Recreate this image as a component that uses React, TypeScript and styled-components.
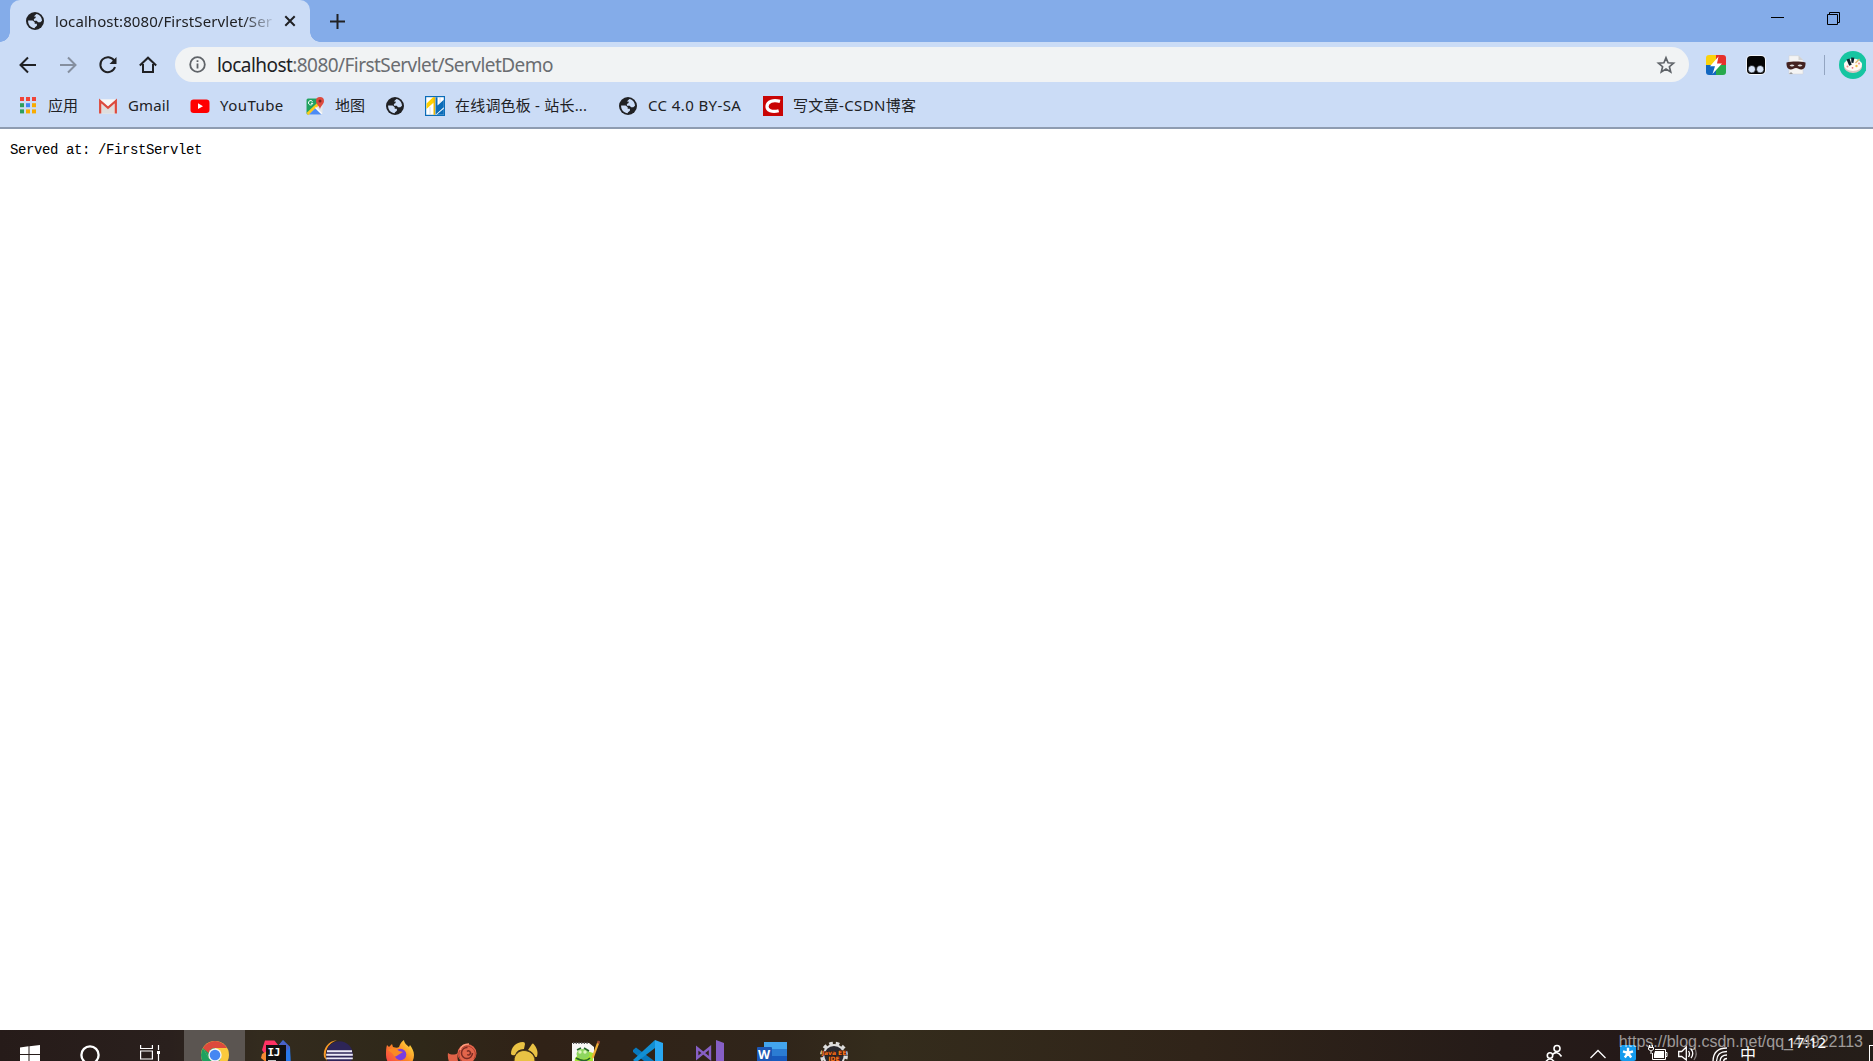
import React from "react";
import styled, { createGlobalStyle } from "styled-components";

const Global = createGlobalStyle`
  html, body { margin: 0; padding: 0; background: #fff; overflow: hidden; }
  * { box-sizing: border-box; }
  svg { display: block; flex: none; overflow: visible; }
`;

const uiFont = `"Noto Sans", "Noto Sans CJK SC", sans-serif`;

const Screen = styled.div`
  width: 1873px;
  height: 1061px;
  display: flex;
  flex-direction: column;
  overflow: hidden;
  font-family: ${uiFont};
  color: #202124;
`;

const TitleBar = styled.div`
  height: 42px;
  flex: none;
  display: flex;
  background: #84ace9;
  padding-left: 10px;
`;

const Tab = styled.div`
  position: relative;
  width: 300px;
  height: 42px;
  display: flex;
  align-items: center;
  padding-left: 15px;
  background: #cbdcf6;
  border-radius: 10px 10px 0 0;
  &::before, &::after {
    content: "";
    position: absolute;
    bottom: 0;
    width: 10px;
    height: 10px;
  }
  &::before {
    left: -10px;
    background: radial-gradient(circle at 0 0, transparent 9.5px, #cbdcf6 10px);
  }
  &::after {
    right: -10px;
    background: radial-gradient(circle at 100% 0, transparent 9.5px, #cbdcf6 10px);
  }
`;

const TabTitle = styled.div`
  width: 219px;
  margin-left: 10px;
  overflow: hidden;
  white-space: nowrap;
  font-size: 15px;
  line-height: 24px;
  letter-spacing: 0.08px;
  mask-image: linear-gradient(to right, #000 188px, transparent 222px);
`;

const CloseSlot = styled.div`
  margin-left: 11px;
`;

const NewTab = styled.div`
  display: flex;
  align-items: center;
  margin-left: 20px;
`;

const WindowControls = styled.div`
  display: flex;
  gap: 43px;
  margin-left: auto;
  padding: 12px 33px 0 0;
`;

const Toolbar = styled.div`
  height: 45px;
  flex: none;
  display: flex;
  align-items: center;
  background: #cbdcf6;
  padding-left: 8px;
`;

const ToolButton = styled.div`
  width: 40px;
  height: 40px;
  display: flex;
  align-items: center;
  justify-content: center;
`;

const Omnibox = styled.div`
  width: 1514px;
  height: 35px;
  margin-left: 7px;
  padding: 0 13px 0 14px;
  display: flex;
  align-items: center;
  border-radius: 18px;
  background: #f1f3f4;
`;

const Url = styled.div`
  margin-left: 11px;
  flex: 1;
  font-size: 19px;
  line-height: 30px;
  letter-spacing: -0.56px;
  white-space: nowrap;
  color: #6a6d71;
  b { font-weight: 400; color: #202124; }
`;

const Extensions = styled.div`
  display: flex;
  align-items: center;
  margin-left: 7px;
`;

const Divider = styled.div`
  width: 1px;
  height: 20px;
  margin: 0 14px 0 8px;
  background: #93a5c1;
`;

const Avatar = styled.div`
  width: 27px;
  height: 28px;
  overflow: hidden;
`;

const BookmarkBar = styled.div`
  height: 42px;
  flex: none;
  display: flex;
  background: #cbdcf6;
  border-bottom: 2px solid #8e9cb1;
  padding: 5px 0 0 18px;
`;

const Bookmark = styled.div<{ $w: number; $ls?: number }>`
  width: ${(p) => p.$w}px;
  height: 27px;
  display: flex;
  align-items: center;
  gap: 10px;
  white-space: nowrap;
  font-size: 15px;
  line-height: 25px;
  letter-spacing: ${(p) => p.$ls ?? 0}px;
  span { padding-bottom: 1px; }
`;

const Page = styled.main`
  flex: 1;
  background: #fff;
  padding: 12px 10px;
  color: #000;
  font: 14px/18px "Liberation Mono", monospace;
  letter-spacing: -0.4px;
`;

const Taskbar = styled.div`
  position: relative;
  height: 31px;
  flex: none;
  display: flex;
  overflow: hidden;
  background: linear-gradient(to right, #261b19 0, #2a201d 170px, #332b1e 260px, #2f2819 420px, #302217 540px, #30251a 780px, #342c1c 880px, #302419 1200px, #251b18 1500px, #241918 1640px, #251e19 1873px);
`;

const TaskSlot = styled.div<{ $w: number; $active?: boolean; $top: number }>`
  width: ${(p) => p.$w}px;
  height: 31px;
  flex: none;
  display: flex;
  justify-content: center;
  padding-top: ${(p) => p.$top}px;
  background: ${(p) => (p.$active ? "#5b5551" : "transparent")};
`;

const TaskGap = styled.div`
  width: 4px;
  flex: none;
`;

const Tray = styled.div`
  display: flex;
  margin-left: auto;
  padding-top: 15px;
  color: #fff;
`;

const TrayItem = styled.div<{ $w: number }>`
  width: ${(p) => p.$w}px;
  flex: none;
`;

const Ime = styled.span`
  display: block;
  font: 400 16px/16px "Noto Sans CJK SC", sans-serif;
`;

const Clock = styled.span`
  display: block;
  margin: -13px 0 0 -1px;
  font: 15px/20px ${uiFont};
  letter-spacing: 0.2px;
`;

const ShowDesktop = styled.div`
  width: 4px;
  height: 20px;
  border-left: 1px solid #fff;
  border-top: 1px solid #fff;
`;

const Watermark = styled.div`
  position: absolute;
  right: 10px;
  top: 3px;
  font: 16px/18px "Liberation Sans", sans-serif;
  white-space: nowrap;
  color: rgba(255, 255, 255, 0.56);
`;

const Globe = ({ size = 20 }: { size?: number }) => (
  <svg width={size} height={size} viewBox="0 0 20 20">
    <circle cx="10" cy="10" r="9" fill="#202124" />
    <path d="M3.1 9.6h4.5l2.1 1.6v1.5h2.2v2.1l-2.1 1.6v.9C5.900 17.300 2.900 13.800 3.100 9.600zM11.400 3.100c3.200.6 5.500 3.500 5.600 6.600l-1.700 1.500h-2.200l-1.400-1.500H8.900V8l1.700-.9V5.600H8.800z" fill="#cbdcf6" />
  </svg>
);

const Line = ({ d, color = "#202124", w = 2 }: { d: string; color?: string; w?: number }) => (
  <svg width="18" height="18" viewBox="0 0 18 18" fill="none" stroke={color} strokeWidth={w}>
    <path d={d} />
  </svg>
);

const Reload = () => (
  <svg width="18" height="18" viewBox="0 0 18 18">
    <path d="M15.2 4.600A7.500 7.500 0 1 0 16 11" fill="none" stroke="#202124" strokeWidth="2" />
    <path d="M17.500 1v7h-7z" fill="#202124" />
  </svg>
);

const appColors = ["#f04438", "#f04438", "#f04438", "#2e9e5b", "#4285f4", "#f9ab00", "#2e9e5b", "#f9ab00", "#f9ab00"];
const Apps = () => (
  <svg width="20" height="20" viewBox="0 0 20 20">
    {appColors.map((c, i) => (
      <rect key={i} x={2 + (i % 3) * 6} y={1 + Math.floor(i / 3) * 6.2} width="4" height="4" fill={c} />
    ))}
  </svg>
);

const Gmail = () => (
  <svg width="20" height="20" viewBox="0 0 20 20">
    <rect x="1" y="3.500" width="18" height="14" rx="1.200" fill="#f2f2f2" />
    <path d="M4 17.500V8l6 5 6-5v9.500" fill="#dedede" />
    <path d="M2.200 17.500V5l7.800 6.800L17.800 5v12.500" fill="none" stroke="#dc4b3e" strokeWidth="2.300" />
    <path d="M2.500 3.500h15L10 9.800z" fill="#f7f7f7" />
  </svg>
);

const YouTube = () => (
  <svg width="20" height="20" viewBox="0 0 20 20">
    <rect x=".5" y="3.500" width="19" height="13.500" rx="3.200" fill="#f00" />
    <path d="M8 7.300l5 2.900-5 2.900z" fill="#fff" />
  </svg>
);

const Maps = () => (
  <svg width="20" height="20" viewBox="0 0 20 20">
    <rect x="1.500" y="2.500" width="16" height="16" rx="1.500" fill="#e4e7ea" />
    <path d="M1.500 4A1.500 1.500 0 0 1 3 2.500h9.500L14 7 3 18.500A1.500 1.500 0 0 1 1.500 17z" fill="#1fa262" />
    <path d="M2.500 18.200L14.200 7" stroke="#fbcb1b" strokeWidth="3" />
    <path d="M4 18.500l6.300-6.200 6.200 6.200z" fill="#4c8bf5" />
    <path d="M10.500 11.500l6.200 6.200" stroke="#fff" strokeWidth="1.200" />
    <path d="M15 13.500c-.3-3.500-4-5-4-8.500a4 4 0 0 1 8 0c0 3.500-3.700 5-4 8.500z" fill="#de4b3f" />
    <circle cx="15" cy="4.900" r="1.500" fill="#7b2720" />
    <path d="M7.600 5.700a2.200 2.200 0 1 0 .2 1.600H6" fill="none" stroke="#fff" strokeWidth="1" />
  </svg>
);

const Palette = () => (
  <svg width="20" height="20" viewBox="0 0 20 20">
    <rect x=".6" y=".6" width="18.800" height="18.800" fill="#fff" stroke="#0a6cb8" strokeWidth="1.200" />
    <path d="M1.500 7.500L8 1.200h1.500V12L8.700 6.500 1.500 13z" fill="#ffd000" />
    <path d="M8.500 1.200h1.700v17.600H8.500z" fill="#e8b80a" />
    <path d="M10.500 1.200h2v8.200l6.300-5.600v7.500l-8.300 7.500z" fill="#0a6cb8" />
    <path d="M11.500 18.800l7.300-6v6z" fill="#0a6cb8" />
    <path d="M5 11v8M15 1v6" stroke="#cfd6dc" strokeWidth=".8" />
  </svg>
);

const Csdn = () => (
  <svg width="20" height="20" viewBox="0 0 20 20">
    <rect width="20" height="20" fill="#c90505" />
    <path d="M17 5.400C10.500 3.500 4.400 5.200 4 10.200c-.3 4.400 5 6.300 11.700 4.600" fill="none" stroke="#fff" strokeWidth="3.200" />
  </svg>
);

const Bolt = () => (
  <svg width="22" height="22" viewBox="0 0 22 22">
    <path d="M11 1H4a3 3 0 0 0-3 3v7h10z" fill="#fbd20b" />
    <path d="M11 1h7a3 3 0 0 1 3 3v7H11z" fill="#e6302b" />
    <path d="M1 11v7a3 3 0 0 0 3 3h7V11z" fill="#1267c0" />
    <path d="M21 11v7a3 3 0 0 1-3 3h-7V11z" fill="#27a94c" />
    <path d="M13.500 2.500L5 12.200h5L7.500 20 17 9.500h-5z" fill="#fff" />
  </svg>
);

const Tamper = () => (
  <svg width="22" height="22" viewBox="0 0 22 22">
    <rect x="1" y="1" width="20" height="20" rx="5" fill="#f3f6fb" />
    <rect x="2" y="2" width="18" height="18" rx="4" fill="#050505" />
    <circle cx="6.800" cy="15.200" r="3.700" fill="#d7e4f7" stroke="#000" strokeWidth=".6" />
    <circle cx="15.200" cy="15.200" r="3.700" fill="#d7e4f7" stroke="#000" strokeWidth=".6" />
  </svg>
);

const Masked = () => (
  <svg width="22" height="22" viewBox="0 0 22 22">
    <path d="M4 1.700h9.500L18 6v14H4z" fill="#f4f4f4" stroke="#d0d0d0" strokeWidth=".5" />
    <path d="M13.500 1.700V6H18z" fill="#d2d2d2" />
    <path d="M1.500 8.500C7 7.300 15 7.300 20.500 8.500c.2 4-1 6.700-4 7-2.300.2-3.400-1.500-5.500-1.500s-3.200 1.700-5.500 1.500c-3-.3-4.200-3-4-7z" fill="#432220" />
    <path d="M4.500 11.500q2.500-2 5 0-2.500 1.800-5 0zM12.500 11.500q2.500-2 5 0-2.500 1.800-5 0z" fill="#ddd" />
    <path d="M4 20l2-2 2 2z" fill="#999" />
  </svg>
);

const AvatarArt = () => (
  <svg width="28" height="28" viewBox="0 0 28 28">
    <circle cx="14" cy="14" r="14" fill="#16c5a1" />
    <ellipse cx="14" cy="15.500" rx="9" ry="6.500" fill="#d9c8c3" />
    <ellipse cx="14" cy="13.800" rx="9" ry="6.200" fill="#fffaf4" />
    <path d="M7.500 8.500l3-.9 2.200 6.200-2.500.9zM12.100 6.500l3.300.2-1 5.300-2-.3z" fill="#10222c" />
    <path d="M16.500 12l4-4" stroke="#d8b56d" strokeWidth="1.300" />
    <circle cx="8.500" cy="15.500" r="1" fill="#f18989" />
    <circle cx="17.500" cy="15" r="1.200" fill="#f0bd44" />
    <circle cx="13.500" cy="16.800" r=".9" fill="#e46e7f" />
    <circle cx="20" cy="12.500" r=".9" fill="#f18989" />
  </svg>
);

const WindowsLogo = () => (
  <svg width="20" height="20" viewBox="0 0 20 20">
    <path d="M0 2.500L8.500 1.300V9H0zM9.500 1.200L20 0v9H9.500zM0 10h8.500v8.700L0 17.500zM9.500 10H20v10L9.500 18.800z" fill="#fff" />
  </svg>
);

const Cortana = () => (
  <svg width="20" height="20" viewBox="0 0 20 20">
    <circle cx="10" cy="10" r="8.600" fill="none" stroke="#fff" strokeWidth="2.300" />
  </svg>
);

const TaskView = () => (
  <svg width="20" height="20" viewBox="0 0 20 20" fill="none" stroke="#fff" strokeWidth="1.200">
    <path d="M.6 0v3.500h11.800V0M.6 20v-3.500h11.800V20M.6 6h11.800v8H.6zM18.500 0v5M18.500 9v8" />
    <path d="M17 6h3v3h-3z" fill="#fff" stroke="none" />
  </svg>
);

const Chrome = () => (
  <svg width="28" height="28" viewBox="0 0 28 28">
    <circle cx="14" cy="14" r="14" fill="#fbc93d" />
    <path d="M14 14l-6 3.500L1.900 7a14 14 0 0 0 11.500 21L20 17z" fill="#1da160" />
    <path d="M1.900 7l6 10.500L14 14V7z" fill="#1da160" />
    <path d="M1.900 7A14 14 0 0 1 26.100 7H14a7 7 0 0 0-6.500 5z" fill="#dc4a3d" />
    <circle cx="14" cy="14" r="6.700" fill="#f4f4f4" />
    <circle cx="14" cy="14" r="5.300" fill="#4687f2" />
  </svg>
);

const IntelliJ = () => (
  <svg width="30" height="30" viewBox="0 0 30 30">
    <path d="M17 6l5-6 7 7 1 18-9 5z" fill="#2878e8" />
    <path d="M17 6l5-5.500L29 7l-6 7z" fill="#4b62c8" />
    <path d="M4 .5h9.500L17 5l-3 8-9 3-4-6z" fill="#fe3264" />
    <path d="M1 14l5-3v12l-6-5z" fill="#f58a32" />
    <rect x="5" y="5" width="20" height="20" fill="#101010" />
    <text x="6.500" y="15.500" fill="#fff" fontFamily="DejaVu Sans Mono" fontWeight="700" fontSize="11" letterSpacing="-.4">IJ</text>
    <path d="M7 21h8" stroke="#fff" strokeWidth="1.500" />
  </svg>
);

const Eclipse = () => (
  <svg width="30" height="30" viewBox="0 0 30 30">
    <path d="M14 .3A14 14 0 0 0 1 17l3 4A15 15 0 0 1 14 .3z" fill="#f79a28" />
    <circle cx="16.500" cy="14.500" r="13.300" fill="#2d2557" />
    <path d="M4 11.200h25M3.200 14.800h26.600M3.200 18.400h26.600M4 22h25" stroke="#eceaf7" strokeWidth="1.900" />
  </svg>
);

const Firefox = () => (
  <svg width="30" height="30" viewBox="0 0 30 30">
    <defs>
      <linearGradient id="ff" x1="0" y1="1" x2="1" y2="0">
        <stop offset="0" stopColor="#f92e53" /><stop offset=".55" stopColor="#fb8a23" /><stop offset="1" stopColor="#fff047" />
      </linearGradient>
    </defs>
    <path d="M2 5l2 2 3-3 1 3c3 1 5 1 6 0 1-3 2-5 5-7 0 3 3 5 5 7l1-2c2 3 4 6 4 10a14 14 0 0 1-28 0c0-4 0-7 1-10z" fill="url(#ff)" />
    <circle cx="15.500" cy="14.500" r="5.800" fill="#7a3de0" />
    <path d="M3 10c5-3 8-2 11 1l4 1-5 3c-2 2-4 2-5-1z" fill="#fa8a25" />
  </svg>
);

const Snail = () => (
  <svg width="30" height="28" viewBox="0 0 30 28">
    <path d="M1 10c3 2 7 2 10 0-2 9 2 13 8 14L9 25C3 23 0 17 1 10z" fill="#e06247" />
    <circle cx="20" cy="10.500" r="9.500" fill="#e2654b" />
    <path d="M15 18a8.300 8.300 0 1 1 12-2" fill="none" stroke="#b0402f" strokeWidth="1" />
    <path d="M20.500 4.500a5.500 5.500 0 1 0 5 5.500M20 8.500a2 2 0 1 1 .2 3" fill="none" stroke="#7b2c23" strokeWidth="1.500" />
    <path d="M13 7q2-6 9-6" fill="none" stroke="#ff9b7d" strokeWidth="1.400" />
  </svg>
);

const Paw = () => (
  <svg width="28" height="30" viewBox="0 0 28 30" fill="#e9c244">
    <path d="M1 13C1 6 6 1 13 1q2 0 2 2l-1 5q-7 0-9 6-3 1-4-1z" />
    <path d="M18 9l4-6q1-1 2 .5c4 5 4 9 3 12q-1 1-2 0-2-5-7-6.500z" />
    <path d="M4 20c0-7 5-10.500 10-10.500S25 13 25 20s-4 9-11 9-10-3-10-9z" stroke="#4a3818" strokeWidth="1" />
  </svg>
);

const Notepad = () => (
  <svg width="30" height="30" viewBox="0 0 30 30">
    <path d="M2 2h17l5 4v22H2z" fill="#f7f7f5" />
    <path d="M3 2h16" stroke="#555" strokeWidth="2" strokeDasharray="1.200 1.500" />
    <path d="M14 9l9 3v16H4l1-11z" fill="#a6e434" />
    <ellipse cx="13" cy="13" rx="6.500" ry="5" fill="#8ed65f" />
    <path d="M6 17q9 5 14 0M7 9l4-2M14 7l5 3" fill="none" stroke="#26662a" strokeWidth="1.600" />
    <circle cx="10" cy="11" r="1.700" fill="#dff6c0" /><circle cx="15" cy="11" r="1.700" fill="#dff6c0" />
    <path d="M28.500 1l-6 16" stroke="#efae35" strokeWidth="2.200" />
    <path d="M29 0l-1 2.500" stroke="#9d4930" strokeWidth="2.400" />
  </svg>
);

const VSCode = () => (
  <svg width="30" height="30" viewBox="0 0 30 30">
    <path d="M22 0l8 3v24l-8 3z" fill="#29a8f2" />
    <path d="M0 10l3-2.500L24 23l-2 7L0 12z" fill="#0878bd" />
    <path d="M0 20L22 0v8L3 22.500z" fill="#118fd4" />
  </svg>
);

const VisualStudio = () => (
  <svg width="28" height="28" viewBox="0 0 28 28">
    <path d="M20 0l8 3v22l-8 3z" fill="#865fc5" />
    <path d="M1.200 8v10L14 7.500v11z" fill="none" stroke="#865fc5" strokeWidth="2.400" />
  </svg>
);

const Word = () => (
  <svg width="30" height="28" viewBox="0 0 30 28">
    <path d="M7 0h23v7H7z" fill="#43a5ee" />
    <path d="M7 7h23v7H7z" fill="#2b7cd3" />
    <path d="M7 14h23v14H7z" fill="#185abd" />
    <rect x="0" y="5" width="15" height="17" rx="1" fill="#1c57b5" />
    <text x="1" y="16.500" fill="#fff" fontFamily="Open Sans" fontWeight="700" fontSize="12.500">W</text>
  </svg>
);

const JavaEE = () => (
  <svg width="30" height="30" viewBox="0 0 30 30">
    <circle cx="15" cy="14.500" r="12.300" fill="none" stroke="#dcdcdc" strokeWidth="3.200" strokeDasharray="3.600 3" />
    <circle cx="15" cy="14.500" r="10.500" fill="#2a2a30" stroke="#dedede" strokeWidth="1.800" />
    <g fill="#ff761b" stroke="#2b1710" strokeWidth="1" paintOrder="stroke" fontFamily="DejaVu Sans" fontWeight="700" fontSize="6" textAnchor="middle">
      <text x="15" y="13.500">Java EE</text>
      <text x="15" y="19.500">IDE</text>
    </g>
  </svg>
);

const bookmarks = [
  { icon: <Apps />, label: "应用", w: 80, ls: -0.1 },
  { icon: <Gmail />, label: "Gmail", w: 92, ls: 0.1 },
  { icon: <YouTube />, label: "YouTube", w: 115, ls: 0.45 },
  { icon: <Maps />, label: "地图", w: 80, ls: 0 },
  { icon: <Globe />, label: "", w: 40, ls: 0 },
  { icon: <Palette />, label: "在线调色板 - 站长...", w: 193, ls: 0.2 },
  { icon: <Globe />, label: "CC 4.0 BY-SA", w: 145, ls: 0.4 },
  { icon: <Csdn />, label: "写文章-CSDN博客", w: 160, ls: 0.35 },
];

const tasks = [
  { icon: <WindowsLogo />, w: 60, top: 15 },
  { icon: <Cortana />, w: 60, top: 15 },
  { icon: <TaskView />, w: 60, top: 15 },
  { icon: <Chrome />, w: 61, top: 11, active: true, gap: true },
  { icon: <IntelliJ />, w: 62, top: 10 },
  { icon: <Eclipse />, w: 61, top: 10 },
  { icon: <Firefox />, w: 63, top: 10 },
  { icon: <Snail />, w: 62, top: 13 },
  { icon: <Paw />, w: 61, top: 11 },
  { icon: <Notepad />, w: 62, top: 11 },
  { icon: <VSCode />, w: 63, top: 10 },
  { icon: <VisualStudio />, w: 62, top: 10 },
  { icon: <Word />, w: 61, top: 12 },
  { icon: <JavaEE />, w: 63, top: 11 },
];

const white = { fill: "none", stroke: "#fff", strokeWidth: 1.3 };

export default function App() {
  return (
    <Screen>
      <Global />
      <TitleBar>
        <Tab>
          <Globe />
          <TabTitle>localhost:8080/FirstServlet/Ser</TabTitle>
          <CloseSlot>
            <svg width="10" height="10" viewBox="0 0 10 10" stroke="#202124" strokeWidth="2"><path d="M.3.300l9.400 9.400M9.700.3L.3 9.700" /></svg>
          </CloseSlot>
        </Tab>
        <NewTab>
          <svg width="15" height="15" viewBox="0 0 15 15" stroke="#202124" strokeWidth="2"><path d="M7.500 0v15M0 7.500h15" /></svg>
        </NewTab>
        <WindowControls>
          <svg width="13" height="13" viewBox="0 0 13 13" stroke="#000"><path d="M0 5.500h13" /></svg>
          <svg width="13" height="13" viewBox="0 0 13 13" stroke="#000" fill="none"><path d="M.5 2.500h10v10H.5zM2.500 2.500v-2h10v10h-2" /></svg>
        </WindowControls>
      </TitleBar>
      <Toolbar>
        <ToolButton><Line d="M17 9H2M9 1.500L1.500 9 9 16.500" /></ToolButton>
        <ToolButton><Line d="M1 9h15M9 1.500L16.500 9 9 16.500" color="#858f9f" /></ToolButton>
        <ToolButton><Reload /></ToolButton>
        <ToolButton><Line d="M.8 9.500L9 1.700l8.200 7.800M4 8v8h10V8" /></ToolButton>
        <Omnibox>
          <svg width="17" height="17" viewBox="0 0 17 17" fill="none" stroke="#5f6368" strokeWidth="1.800"><circle cx="8.500" cy="8.500" r="7.300" /><path d="M8.500 7.500v5M8.500 4.300v1.800" /></svg>
          <Url><b>localhost</b>:8080/FirstServlet/ServletDemo</Url>
          <svg width="20" height="20" viewBox="0 0 20 20" fill="none" stroke="#5f6368" strokeWidth="1.700"><path d="M10 2.800l2.100 5 5.400.4-4.100 3.500 1.300 5.200-4.700-2.800-4.700 2.800 1.300-5.200-4.100-3.500 5.400-.4z" /></svg>
        </Omnibox>
        <Extensions>
          <ToolButton><Bolt /></ToolButton>
          <ToolButton><Tamper /></ToolButton>
          <ToolButton><Masked /></ToolButton>
          <Divider />
          <Avatar><AvatarArt /></Avatar>
        </Extensions>
      </Toolbar>
      <BookmarkBar>
        {bookmarks.map((b, i) => (
          <Bookmark key={i} $w={b.w} $ls={b.ls}>{b.icon}{b.label && <span>{b.label}</span>}</Bookmark>
        ))}
      </BookmarkBar>
      <Page>Served at: /FirstServlet</Page>
      <Taskbar>
        {tasks.map((t, i) => (
          <React.Fragment key={i}>
            {t.gap && <TaskGap />}
            <TaskSlot $w={t.w} $top={t.top} $active={t.active}>{t.icon}</TaskSlot>
          </React.Fragment>
        ))}
        <Tray>
          <TrayItem $w={45}>
            <svg width="18" height="18" viewBox="0 0 18 18" {...white} strokeWidth="1.600"><circle cx="12" cy="3.500" r="3" /><circle cx="5" cy="10.500" r="2.700" /><path d="M7.500 9.500q4.500-4.500 9 2M.5 17q4.500-6 9 0" /></svg>
          </TrayItem>
          <TrayItem $w={30}>
            <svg width="16" height="16" viewBox="0 0 16 16" {...white}><path d="M.5 13L8 5.500l7.500 7.500" /></svg>
          </TrayItem>
          <TrayItem $w={28}>
            <svg width="16" height="16" viewBox="0 0 16 16"><rect width="16" height="16" rx="2.500" fill="#159bed" /><path d="M8 8V2.800M8 8l5-1.600M8 8l3.200 4.500M8 8l-3.200 4.500M8 8L3 6.400" stroke="#fff" strokeWidth="2.400" /></svg>
          </TrayItem>
          <TrayItem $w={30}>
            <svg width="20" height="16" viewBox="0 0 20 16" {...white} strokeWidth="1"><path d="M7 4.500h10.500v10H4.500V8M17.500 7.500h1.500v4h-1.500M1.500 0v2M4.500 0v2M.5 2.500h5v2q-2.500 3-5 0zM3 6v3" /><path d="M7 6h9v7H6V9z" fill="#fff" stroke="none" /></svg>
          </TrayItem>
          <TrayItem $w={34}>
            <svg width="20" height="18" viewBox="0 0 20 18" {...white}><path d="M.7 6.500h3L8.300 2v13L3.700 11.500h-3zM10.500 6q2 3 0 6M13 4q3.500 4.500 0 9" /><path d="M16 2q4.500 6.500 0 13" opacity=".4" /></svg>
          </TrayItem>
          <TrayItem $w={28}>
            <svg width="16" height="18" viewBox="0 0 16 18" {...white}><path d="M1 17Q1 3 15 3M4.500 17Q4.500 6.500 15 6.500M8 17Q8 10 15 10M11.500 17q0-3.500 3.500-3.500" /></svg>
          </TrayItem>
          <TrayItem $w={48}><Ime>中</Ime></TrayItem>
          <TrayItem $w={81}><Clock>17:12</Clock></TrayItem>
          <ShowDesktop />
        </Tray>
        <Watermark>https://blog.csdn.net/qq_44922113</Watermark>
      </Taskbar>
    </Screen>
  );
}
